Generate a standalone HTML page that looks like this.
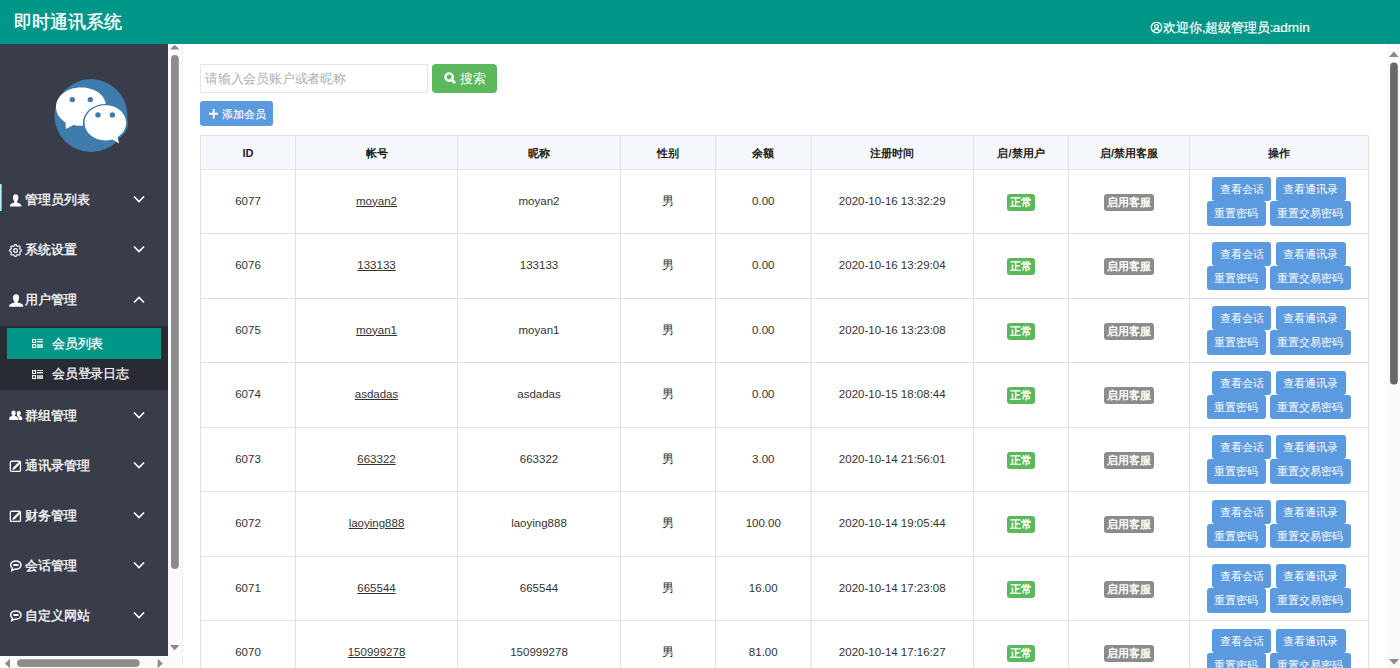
<!DOCTYPE html>
<html><head><meta charset="utf-8"><style>
*{box-sizing:border-box;margin:0;padding:0}
html,body{width:1400px;height:668px;overflow:hidden;background:#fff;font-family:"Liberation Sans",sans-serif;color:#333}
.abs{position:absolute}
#hdr{left:0;top:0;width:1400px;height:44px;background:#009688}
#title{left:14px;top:9.5px;font-size:18px;line-height:24px;color:#fff;white-space:nowrap;-webkit-text-stroke:.35px #fff}
#welcome{left:1150px;top:19px;font-size:13px;line-height:18px;color:#fff;white-space:nowrap;-webkit-text-stroke:.2px #fff}
#side{left:0;top:44px;width:168px;height:612px;background:#393D49;overflow:hidden}
.nav{position:absolute;left:0;width:168px;height:50px;color:#fff;font-size:13px}
.nav .ic{position:absolute;left:9px;top:19px;line-height:0}
.nav .tx{position:absolute;left:25px;top:16px;line-height:18px;white-space:nowrap;-webkit-text-stroke:.3px #fff}
.nav .ch{position:absolute;left:133px;top:20.3px;line-height:0}
.nav .ch.up{top:21px}
#sub{left:0;top:282px;width:168px;height:64px;background:#282B33}
.si{position:absolute;left:7px;width:154px;height:30px;color:#fff;font-size:13px}
.si .ic{position:absolute;left:25px;top:10px;line-height:0}
.si .tx{position:absolute;left:45px;top:6.4px;line-height:18px;white-space:nowrap;letter-spacing:-.25px;-webkit-text-stroke:.2px #fff}
.sbtrack{background:#fafafa}
.tri{position:absolute;width:0;height:0}
#search{left:200px;top:64px;width:228px;height:29px;border:1px solid #e6e6e6;font-size:13px;letter-spacing:-.2px;color:#b0b0b0;padding-left:4px;padding-top:1px;line-height:26px;white-space:nowrap}
#sbtn{left:432px;top:64px;width:65px;height:28.5px;background:#5cb85c;border-radius:4px;color:#fff;font-size:13px}
#abtn{left:200px;top:101px;width:73px;height:25px;background:#5b9ade;border-radius:3px;color:#fff;font-size:10.8px}
.hl{position:absolute;background:#e2e2e2}
.cell{position:absolute;text-align:center;white-space:nowrap}
.th{font-weight:bold;font-size:11px;color:#222;line-height:16px}
.td{font-size:11.5px;color:#333;line-height:16px}
.td u{text-decoration:underline}
.lab{position:absolute;height:17px;line-height:17px;font-size:10.8px;font-weight:bold;color:#fff;border-radius:3px;text-align:center}
.btn{position:absolute;height:24.2px;line-height:24px;font-size:10.8px;color:#fff;background:#5b9ade;border-radius:3px;text-align:center;white-space:nowrap}
</style></head><body>

<div id="hdr" class="abs"></div>
<div id="title" class="abs">即时通讯系统</div>
<div id="welcome" class="abs"><svg width="13" height="13" viewBox="0 0 13 13" style="vertical-align:-2.2px"><circle cx="6.5" cy="6.5" r="5.2" fill="none" stroke="#fff" stroke-width="1.35"/><circle cx="6.5" cy="5.5" r="1.85" fill="none" stroke="#fff" stroke-width="1.3"/><path d="M3.3 10.3C4.1 8.9 5.2 8.2 6.5 8.2S8.9 8.9 9.7 10.3" fill="none" stroke="#fff" stroke-width="1.3"/></svg>欢迎你<span style="letter-spacing:-1px">,</span>超级管理员<span style="letter-spacing:-.5px">:</span><span style="font-size:13.6px">admin</span></div>
<div id="side" class="abs">
<svg class="abs" style="left:54px;top:35px" width="74" height="74" viewBox="0 0 74 74">
<circle cx="37" cy="36.6" r="36.5" fill="#3f7cad"/>
<path d="M27 8.5C13 8.5 2 17.2 2 28.1C2 34.3 5.6 39.8 11.6 43.6L11.8 49.9L19.6 45.9C21.8 46.5 24.3 46.8 27 46.8C41 46.8 52 38.1 52 27.2C52 16.3 41 8.5 27 8.5Z" fill="#fff"/>
<ellipse cx="51.4" cy="44" rx="22.6" ry="19" fill="#3f7cad"/>
<path d="M51.4 26.2c-11.5 0-20.8 7.8-20.8 17.6 0 9.8 9.3 17.6 20.8 17.6 2.4 0 4.7-.3 6.9-1l6.9 4.2-1.7-6.4c5.3-3.2 8.7-8.6 8.7-14.4 0-9.8-9.3-17.6-20.8-17.6z" fill="#fff"/>
<circle cx="18.3" cy="20.6" r="2.7" fill="#3f7cad"/><circle cx="36.3" cy="20.6" r="2.7" fill="#3f7cad"/>
<circle cx="44" cy="35.9" r="2.7" fill="#3f7cad"/><circle cx="58.4" cy="35.9" r="2.7" fill="#3f7cad"/>
</svg>
</div>
<div id="sub" class="abs" style="top:326px"></div>
<div class="si" style="top:328.4px;height:30.2px;background:#009688"><span class="ic"><svg width="12" height="11" viewBox="0 0 12 11"><rect x=".55" y="1.55" width="3" height="2.9" fill="none" stroke="#fff" stroke-width="1.1"/><rect x=".55" y="6.65" width="3" height="2.9" fill="none" stroke="#fff" stroke-width="1.1"/><rect x="5" y="1.1" width="6" height=".9" fill="#fff"/><rect x="5" y="3.1" width="6" height="1.3" fill="#fff"/><rect x="5" y="6.1" width="6" height="3.9" fill="#fff" fill-opacity=".75"/></svg></span><span class="tx">会员列表</span></div>
<div class="si" style="top:358.5px"><span class="ic"><svg width="12" height="11" viewBox="0 0 12 11"><rect x=".55" y="1.55" width="3" height="2.9" fill="none" stroke="#fff" stroke-width="1.1"/><rect x=".55" y="6.65" width="3" height="2.9" fill="none" stroke="#fff" stroke-width="1.1"/><rect x="5" y="1.1" width="6" height=".9" fill="#fff"/><rect x="5" y="3.1" width="6" height="1.3" fill="#fff"/><rect x="5" y="6.1" width="6" height="3.9" fill="#fff" fill-opacity=".75"/></svg></span><span class="tx">会员登录日志</span></div>
<div class="nav" style="top:175.0px"><span class="ic"><svg width="15" height="13" viewBox="0 0 15 13"><path d="M6.7 0.3C8.6 0.3 9.4 1.7 9.4 3.6C9.4 5.3 8.9 6.6 8.1 7.3V8.4C10.5 8.9 12 10 12.4 11.2V12.4H1V11.2C1.4 10 2.9 8.9 5.3 8.4V7.3C4.5 6.6 4 5.3 4 3.6C4 1.7 4.8 0.3 6.7 0.3Z" fill="#fff"/></svg></span><span class="tx">管理员列表</span><span class="ch"><svg width="12" height="8" viewBox="0 0 12 8"><path d="M1 1.5l5 5 5-5" fill="none" stroke="#fff" stroke-width="1.6"/></svg></span></div>
<div class="nav" style="top:225.0px"><span class="ic"><svg width="13" height="13" viewBox="0 0 13 13"><path d="M12.55 6.50 L12.51 6.74 L12.39 6.96 L12.20 7.17 L11.96 7.37 L11.70 7.53 L11.43 7.68 L11.18 7.82 L10.96 7.95 L10.80 8.09 L10.70 8.24 L10.67 8.42 L10.68 8.63 L10.74 8.87 L10.82 9.15 L10.91 9.44 L10.98 9.75 L11.01 10.05 L10.99 10.34 L10.92 10.58 L10.78 10.78 L10.58 10.92 L10.34 10.99 L10.05 11.01 L9.75 10.98 L9.44 10.91 L9.15 10.82 L8.87 10.74 L8.63 10.68 L8.42 10.67 L8.24 10.70 L8.09 10.80 L7.95 10.96 L7.82 11.18 L7.68 11.43 L7.53 11.70 L7.37 11.96 L7.17 12.20 L6.96 12.39 L6.74 12.51 L6.50 12.55 L6.26 12.51 L6.04 12.39 L5.83 12.20 L5.63 11.96 L5.47 11.70 L5.32 11.43 L5.18 11.18 L5.05 10.96 L4.91 10.80 L4.76 10.70 L4.58 10.67 L4.37 10.68 L4.13 10.74 L3.85 10.82 L3.56 10.91 L3.25 10.98 L2.95 11.01 L2.66 10.99 L2.42 10.92 L2.22 10.78 L2.08 10.58 L2.01 10.34 L1.99 10.05 L2.02 9.75 L2.09 9.44 L2.18 9.15 L2.26 8.87 L2.32 8.63 L2.33 8.42 L2.30 8.24 L2.20 8.09 L2.04 7.95 L1.82 7.82 L1.57 7.68 L1.30 7.53 L1.04 7.37 L0.80 7.17 L0.61 6.96 L0.49 6.74 L0.45 6.50 L0.49 6.26 L0.61 6.04 L0.80 5.83 L1.04 5.63 L1.30 5.47 L1.57 5.32 L1.82 5.18 L2.04 5.05 L2.20 4.91 L2.30 4.76 L2.33 4.58 L2.32 4.37 L2.26 4.13 L2.18 3.85 L2.09 3.56 L2.02 3.25 L1.99 2.95 L2.01 2.66 L2.08 2.42 L2.22 2.22 L2.42 2.08 L2.66 2.01 L2.95 1.99 L3.25 2.02 L3.56 2.09 L3.85 2.18 L4.13 2.26 L4.37 2.32 L4.58 2.33 L4.76 2.30 L4.91 2.20 L5.05 2.04 L5.18 1.82 L5.32 1.57 L5.47 1.30 L5.63 1.04 L5.83 0.80 L6.04 0.61 L6.26 0.49 L6.50 0.45 L6.74 0.49 L6.96 0.61 L7.17 0.80 L7.37 1.04 L7.53 1.30 L7.68 1.57 L7.82 1.82 L7.95 2.04 L8.09 2.20 L8.24 2.30 L8.42 2.33 L8.63 2.32 L8.87 2.26 L9.15 2.18 L9.44 2.09 L9.75 2.02 L10.05 1.99 L10.34 2.01 L10.58 2.08 L10.78 2.22 L10.92 2.42 L10.99 2.66 L11.01 2.95 L10.98 3.25 L10.91 3.56 L10.82 3.85 L10.74 4.13 L10.68 4.37 L10.67 4.58 L10.70 4.76 L10.80 4.91 L10.96 5.05 L11.18 5.18 L11.43 5.32 L11.70 5.47 L11.96 5.63 L12.20 5.83 L12.39 6.04 L12.51 6.26 L12.55 6.50Z" fill="none" stroke="#fff" stroke-width="1.2"/><circle cx="6.5" cy="6.5" r="1.9" fill="none" stroke="#fff" stroke-width="1.2"/></svg></span><span class="tx">系统设置</span><span class="ch"><svg width="12" height="8" viewBox="0 0 12 8"><path d="M1 1.5l5 5 5-5" fill="none" stroke="#fff" stroke-width="1.6"/></svg></span></div>
<div class="nav" style="top:275.0px"><span class="ic"><svg width="15" height="13" viewBox="0 0 15 13"><path d="M7 0.3C9.2 0.3 10.1 1.8 10.1 3.8C10.1 5.5 9.5 6.9 8.6 7.6V8.6C11.5 9.1 13.8 10.3 14.2 11.5V12.7H0.2V11.5C0.6 10.3 2.9 9.1 5.6 8.6V7.6C4.6 6.9 4 5.5 4 3.8C4 1.8 4.9 0.3 7 0.3Z" fill="#fff"/></svg></span><span class="tx">用户管理</span><span class="ch up"><svg width="12" height="8" viewBox="0 0 12 8"><path d="M1 6.5l5-5 5 5" fill="none" stroke="#fff" stroke-width="1.6"/></svg></span></div>
<div class="nav" style="top:390.5px"><span class="ic"><svg width="14" height="11" viewBox="0 0 14 11"><path d="M9.8 1.1C11 1.1 11.8 2 11.8 3.2C11.8 4.2 11.4 5 10.9 5.5V6C12.3 6.3 13.2 7.1 13.2 8.1V10H9.4V8.3C9.4 7.3 8.9 6.5 8 5.9L8.3 5.5C8 5 7.8 4.2 7.8 3.2C7.8 2 8.6 1.1 9.8 1.1Z" fill="#fff"/><path d="M4.55 .6C5.9 .6 6.7 1.6 6.7 3C6.7 4.1 6.3 5 5.7 5.5V6C7.6 6.3 8.9 7.2 8.9 8.3V10H.2V8.3C.2 7.2 1.5 6.3 3.4 6V5.5C2.8 5 2.4 4.1 2.4 3C2.4 1.6 3.2 .6 4.55 .6Z" fill="#fff"/></svg></span><span class="tx">群组管理</span><span class="ch"><svg width="12" height="8" viewBox="0 0 12 8"><path d="M1 1.5l5 5 5-5" fill="none" stroke="#fff" stroke-width="1.6"/></svg></span></div>
<div class="nav" style="top:440.5px"><span class="ic"><svg width="13" height="13" viewBox="0 0 13 13"><rect x="1.35" y="1.25" width="10.1" height="10.1" rx="1.2" fill="none" stroke="#fff" stroke-width="1.3"/><path d="M3.2 10.1L4 7.7L10.3 1.4L11.9 3L5.6 9.3Z" fill="#fff"/></svg></span><span class="tx">通讯录管理</span><span class="ch"><svg width="12" height="8" viewBox="0 0 12 8"><path d="M1 1.5l5 5 5-5" fill="none" stroke="#fff" stroke-width="1.6"/></svg></span></div>
<div class="nav" style="top:490.5px"><span class="ic"><svg width="13" height="13" viewBox="0 0 13 13"><rect x="1.35" y="1.25" width="10.1" height="10.1" rx="1.2" fill="none" stroke="#fff" stroke-width="1.3"/><path d="M3.2 10.1L4 7.7L10.3 1.4L11.9 3L5.6 9.3Z" fill="#fff"/></svg></span><span class="tx">财务管理</span><span class="ch"><svg width="12" height="8" viewBox="0 0 12 8"><path d="M1 1.5l5 5 5-5" fill="none" stroke="#fff" stroke-width="1.6"/></svg></span></div>
<div class="nav" style="top:540.5px"><span class="ic"><svg width="13" height="13" viewBox="0 0 13 13"><path d="M6.9 .9C4 .9 1.7 2.8 1.7 5.1c0 1.3.6 2.4 1.6 3.1L2.8 10.6 5.6 9.2c.4.1.8.1 1.3.1 2.9 0 5.1-1.9 5.1-4.2S9.8.9 6.9.9z" fill="none" stroke="#fff" stroke-width="1.45"/><rect x="4.3" y="4.1" width="5.2" height="2" rx=".4" fill="#fff"/></svg></span><span class="tx">会话管理</span><span class="ch"><svg width="12" height="8" viewBox="0 0 12 8"><path d="M1 1.5l5 5 5-5" fill="none" stroke="#fff" stroke-width="1.6"/></svg></span></div>
<div class="nav" style="top:590.5px"><span class="ic"><svg width="13" height="13" viewBox="0 0 13 13"><path d="M6.9 .9C4 .9 1.7 2.8 1.7 5.1c0 1.3.6 2.4 1.6 3.1L2.8 10.6 5.6 9.2c.4.1.8.1 1.3.1 2.9 0 5.1-1.9 5.1-4.2S9.8.9 6.9.9z" fill="none" stroke="#fff" stroke-width="1.45"/><rect x="4.3" y="4.1" width="5.2" height="2" rx=".4" fill="#fff"/></svg></span><span class="tx">自定义网站</span><span class="ch"><svg width="12" height="8" viewBox="0 0 12 8"><path d="M1 1.5l5 5 5-5" fill="none" stroke="#fff" stroke-width="1.6"/></svg></span></div>
<div class="abs" style="left:0;top:183.7px;width:1.8px;height:27.8px;border-radius:0 1px 1px 0;background:linear-gradient(to right,#d0f6ff 0,#a8e8ff 45%,#1e8fff 100%)"></div>
<div class="abs sbtrack" style="left:168px;top:44px;width:14px;height:624px"></div>
<div class="abs" style="left:182px;top:44px;width:1px;height:624px;background:#f0f0f0"></div>
<svg class="abs" style="left:168px;top:44px" width="14" height="624" viewBox="0 0 14 624"><path d="M2 5.6h9.4L6.7 .8z" fill="#8a8a8a"/><rect x="3" y="11" width="7.8" height="514" rx="3.9" fill="#8c8c8c"/><path d="M2 601h9.4l-4.7 5.3z" fill="#8a8a8a"/></svg>
<div class="abs sbtrack" style="left:0;top:656px;width:168px;height:12px"></div>
<svg class="abs" style="left:0;top:656px" width="168" height="12" viewBox="0 0 168 12"><path d="M10 2.8v9.4L5 7.5z" fill="#8a8a8a"/><rect x="17" y="3.3" width="122.7" height="7.6" rx="3.8" fill="#8c8c8c"/><path d="M157.7 2.8v9.4l5-4.7z" fill="#8a8a8a"/></svg>
<div class="abs sbtrack" style="left:1387px;top:44px;width:13px;height:624px"></div>
<svg class="abs" style="left:1387px;top:44px" width="13" height="624" viewBox="0 0 13 624"><path d="M2 12.9h9.6L6.8 7.6z" fill="#8a8a8a"/><rect x="3.1" y="18.5" width="7.7" height="322" rx="3.85" fill="#686868"/><path d="M2 614.9h10l-5 5.5z" fill="#8a8a8a"/></svg>
<div id="search" class="abs">请输入会员账户或者昵称</div>
<div id="sbtn" class="abs"><svg class="abs" style="left:12px;top:8.3px" width="12" height="12" viewBox="0 0 12 12"><circle cx="5.1" cy="5.1" r="3.7" fill="none" stroke="#fff" stroke-width="2.4"/><path d="M7.8 7.8l2.4 2.4" stroke="#fff" stroke-width="2.8" stroke-linecap="round"/></svg><span class="abs" style="left:28px;top:5.6px;line-height:18px">搜索</span></div>
<div id="abtn" class="abs"><svg class="abs" style="left:9px;top:8.3px" width="9.4" height="9.4" viewBox="0 0 9.4 9.4"><path d="M4.7 0v9.4M0 4.7h9.4" stroke="#fff" stroke-width="1.9"/></svg><span class="abs" style="left:22px;top:5.8px;line-height:14px;-webkit-text-stroke:.15px #fff">添加会员</span></div>
<div class="abs" style="left:200px;top:135.4px;width:1168.2px;height:34.1px;background:#f5f9fd"></div>
<div class="hl" style="left:200px;top:135px;width:1px;height:533px"></div>
<div class="hl" style="left:295px;top:135px;width:1px;height:533px"></div>
<div class="hl" style="left:457px;top:135px;width:1px;height:533px"></div>
<div class="hl" style="left:620px;top:135px;width:1px;height:533px"></div>
<div class="hl" style="left:715px;top:135px;width:1px;height:533px"></div>
<div class="hl" style="left:973px;top:135px;width:1px;height:533px"></div>
<div class="hl" style="left:1068px;top:135px;width:1px;height:533px"></div>
<div class="hl" style="left:1189px;top:135px;width:1px;height:533px"></div>
<div class="hl" style="left:1368px;top:135px;width:1px;height:533px"></div>
<div class="hl" style="left:810px;top:135px;width:2px;height:533px;background:#ececec"></div>
<div class="hl" style="left:200px;top:135.00px;width:1169px;height:1px"></div>
<div class="hl" style="left:200px;top:169.00px;width:1169px;height:1px"></div>
<div class="hl" style="left:200px;top:233.00px;width:1169px;height:1px"></div>
<div class="hl" style="left:200px;top:298.00px;width:1169px;height:1px"></div>
<div class="hl" style="left:200px;top:362.00px;width:1169px;height:1px"></div>
<div class="hl" style="left:200px;top:427.00px;width:1169px;height:1px"></div>
<div class="hl" style="left:200px;top:491.00px;width:1169px;height:1px"></div>
<div class="hl" style="left:200px;top:556.00px;width:1169px;height:1px"></div>
<div class="hl" style="left:200px;top:620.00px;width:1169px;height:1px"></div>
<div class="cell th" style="left:200.50px;width:95.00px;top:144.9px">ID</div>
<div class="cell th" style="left:295.50px;width:162.00px;top:144.9px">帐号</div>
<div class="cell th" style="left:457.50px;width:163.00px;top:144.9px">昵称</div>
<div class="cell th" style="left:620.50px;width:95.00px;top:144.9px">性别</div>
<div class="cell th" style="left:715.50px;width:95.50px;top:144.9px">余额</div>
<div class="cell th" style="left:811.00px;width:162.50px;top:144.9px">注册时间</div>
<div class="cell th" style="left:973.50px;width:95.00px;top:144.9px">启/禁用户</div>
<div class="cell th" style="left:1068.50px;width:121.00px;top:144.9px">启/禁用客服</div>
<div class="cell th" style="left:1189.50px;width:179.00px;top:144.9px">操作</div>
<div class="cell td" style="left:200.50px;width:95.00px;top:192.5px">6077</div>
<div class="cell td" style="left:295.50px;width:162.00px;top:192.5px"><u>moyan2</u></div>
<div class="cell td" style="left:457.50px;width:163.00px;top:192.5px">moyan2</div>
<div class="cell td" style="left:620.50px;width:95.00px;top:192.5px">男</div>
<div class="cell td" style="left:715.50px;width:95.50px;top:192.5px">0.00</div>
<div class="cell td" style="left:811.00px;width:162.50px;top:192.5px">2020-10-16 13:32:29</div>
<div class="lab" style="left:1006.7px;top:193.9px;width:28.3px;background:#5cb85c">正常</div>
<div class="lab" style="left:1103.8px;top:193.9px;width:50.1px;background:#8c8c8c">启用客服</div>
<div class="btn" style="left:1212.1px;top:177.3px;width:59px">查看会话</div>
<div class="btn" style="left:1275.5px;top:177.3px;width:70px">查看通讯录</div>
<div class="btn" style="left:1206.8px;top:201.2px;width:59.2px;height:24.6px">重置密码</div>
<div class="btn" style="left:1269.7px;top:201.2px;width:81.1px;height:24.6px">重置交易密码</div>
<div class="cell td" style="left:200.50px;width:95.00px;top:257.0px">6076</div>
<div class="cell td" style="left:295.50px;width:162.00px;top:257.0px"><u>133133</u></div>
<div class="cell td" style="left:457.50px;width:163.00px;top:257.0px">133133</div>
<div class="cell td" style="left:620.50px;width:95.00px;top:257.0px">男</div>
<div class="cell td" style="left:715.50px;width:95.50px;top:257.0px">0.00</div>
<div class="cell td" style="left:811.00px;width:162.50px;top:257.0px">2020-10-16 13:29:04</div>
<div class="lab" style="left:1006.7px;top:258.4px;width:28.3px;background:#5cb85c">正常</div>
<div class="lab" style="left:1103.8px;top:258.4px;width:50.1px;background:#8c8c8c">启用客服</div>
<div class="btn" style="left:1212.1px;top:241.8px;width:59px">查看会话</div>
<div class="btn" style="left:1275.5px;top:241.8px;width:70px">查看通讯录</div>
<div class="btn" style="left:1206.8px;top:265.7px;width:59.2px;height:24.6px">重置密码</div>
<div class="btn" style="left:1269.7px;top:265.7px;width:81.1px;height:24.6px">重置交易密码</div>
<div class="cell td" style="left:200.50px;width:95.00px;top:321.5px">6075</div>
<div class="cell td" style="left:295.50px;width:162.00px;top:321.5px"><u>moyan1</u></div>
<div class="cell td" style="left:457.50px;width:163.00px;top:321.5px">moyan1</div>
<div class="cell td" style="left:620.50px;width:95.00px;top:321.5px">男</div>
<div class="cell td" style="left:715.50px;width:95.50px;top:321.5px">0.00</div>
<div class="cell td" style="left:811.00px;width:162.50px;top:321.5px">2020-10-16 13:23:08</div>
<div class="lab" style="left:1006.7px;top:322.9px;width:28.3px;background:#5cb85c">正常</div>
<div class="lab" style="left:1103.8px;top:322.9px;width:50.1px;background:#8c8c8c">启用客服</div>
<div class="btn" style="left:1212.1px;top:306.3px;width:59px">查看会话</div>
<div class="btn" style="left:1275.5px;top:306.3px;width:70px">查看通讯录</div>
<div class="btn" style="left:1206.8px;top:330.2px;width:59.2px;height:24.6px">重置密码</div>
<div class="btn" style="left:1269.7px;top:330.2px;width:81.1px;height:24.6px">重置交易密码</div>
<div class="cell td" style="left:200.50px;width:95.00px;top:386.0px">6074</div>
<div class="cell td" style="left:295.50px;width:162.00px;top:386.0px"><u>asdadas</u></div>
<div class="cell td" style="left:457.50px;width:163.00px;top:386.0px">asdadas</div>
<div class="cell td" style="left:620.50px;width:95.00px;top:386.0px">男</div>
<div class="cell td" style="left:715.50px;width:95.50px;top:386.0px">0.00</div>
<div class="cell td" style="left:811.00px;width:162.50px;top:386.0px">2020-10-15 18:08:44</div>
<div class="lab" style="left:1006.7px;top:387.4px;width:28.3px;background:#5cb85c">正常</div>
<div class="lab" style="left:1103.8px;top:387.4px;width:50.1px;background:#8c8c8c">启用客服</div>
<div class="btn" style="left:1212.1px;top:370.8px;width:59px">查看会话</div>
<div class="btn" style="left:1275.5px;top:370.8px;width:70px">查看通讯录</div>
<div class="btn" style="left:1206.8px;top:394.7px;width:59.2px;height:24.6px">重置密码</div>
<div class="btn" style="left:1269.7px;top:394.7px;width:81.1px;height:24.6px">重置交易密码</div>
<div class="cell td" style="left:200.50px;width:95.00px;top:450.5px">6073</div>
<div class="cell td" style="left:295.50px;width:162.00px;top:450.5px"><u>663322</u></div>
<div class="cell td" style="left:457.50px;width:163.00px;top:450.5px">663322</div>
<div class="cell td" style="left:620.50px;width:95.00px;top:450.5px">男</div>
<div class="cell td" style="left:715.50px;width:95.50px;top:450.5px">3.00</div>
<div class="cell td" style="left:811.00px;width:162.50px;top:450.5px">2020-10-14 21:56:01</div>
<div class="lab" style="left:1006.7px;top:451.9px;width:28.3px;background:#5cb85c">正常</div>
<div class="lab" style="left:1103.8px;top:451.9px;width:50.1px;background:#8c8c8c">启用客服</div>
<div class="btn" style="left:1212.1px;top:435.3px;width:59px">查看会话</div>
<div class="btn" style="left:1275.5px;top:435.3px;width:70px">查看通讯录</div>
<div class="btn" style="left:1206.8px;top:459.2px;width:59.2px;height:24.6px">重置密码</div>
<div class="btn" style="left:1269.7px;top:459.2px;width:81.1px;height:24.6px">重置交易密码</div>
<div class="cell td" style="left:200.50px;width:95.00px;top:515.0px">6072</div>
<div class="cell td" style="left:295.50px;width:162.00px;top:515.0px"><u>laoying888</u></div>
<div class="cell td" style="left:457.50px;width:163.00px;top:515.0px">laoying888</div>
<div class="cell td" style="left:620.50px;width:95.00px;top:515.0px">男</div>
<div class="cell td" style="left:715.50px;width:95.50px;top:515.0px">100.00</div>
<div class="cell td" style="left:811.00px;width:162.50px;top:515.0px">2020-10-14 19:05:44</div>
<div class="lab" style="left:1006.7px;top:516.4px;width:28.3px;background:#5cb85c">正常</div>
<div class="lab" style="left:1103.8px;top:516.4px;width:50.1px;background:#8c8c8c">启用客服</div>
<div class="btn" style="left:1212.1px;top:499.8px;width:59px">查看会话</div>
<div class="btn" style="left:1275.5px;top:499.8px;width:70px">查看通讯录</div>
<div class="btn" style="left:1206.8px;top:523.7px;width:59.2px;height:24.6px">重置密码</div>
<div class="btn" style="left:1269.7px;top:523.7px;width:81.1px;height:24.6px">重置交易密码</div>
<div class="cell td" style="left:200.50px;width:95.00px;top:579.5px">6071</div>
<div class="cell td" style="left:295.50px;width:162.00px;top:579.5px"><u>665544</u></div>
<div class="cell td" style="left:457.50px;width:163.00px;top:579.5px">665544</div>
<div class="cell td" style="left:620.50px;width:95.00px;top:579.5px">男</div>
<div class="cell td" style="left:715.50px;width:95.50px;top:579.5px">16.00</div>
<div class="cell td" style="left:811.00px;width:162.50px;top:579.5px">2020-10-14 17:23:08</div>
<div class="lab" style="left:1006.7px;top:580.9px;width:28.3px;background:#5cb85c">正常</div>
<div class="lab" style="left:1103.8px;top:580.9px;width:50.1px;background:#8c8c8c">启用客服</div>
<div class="btn" style="left:1212.1px;top:564.3px;width:59px">查看会话</div>
<div class="btn" style="left:1275.5px;top:564.3px;width:70px">查看通讯录</div>
<div class="btn" style="left:1206.8px;top:588.2px;width:59.2px;height:24.6px">重置密码</div>
<div class="btn" style="left:1269.7px;top:588.2px;width:81.1px;height:24.6px">重置交易密码</div>
<div class="cell td" style="left:200.50px;width:95.00px;top:644.0px">6070</div>
<div class="cell td" style="left:295.50px;width:162.00px;top:644.0px"><u>150999278</u></div>
<div class="cell td" style="left:457.50px;width:163.00px;top:644.0px">150999278</div>
<div class="cell td" style="left:620.50px;width:95.00px;top:644.0px">男</div>
<div class="cell td" style="left:715.50px;width:95.50px;top:644.0px">81.00</div>
<div class="cell td" style="left:811.00px;width:162.50px;top:644.0px">2020-10-14 17:16:27</div>
<div class="lab" style="left:1006.7px;top:645.4px;width:28.3px;background:#5cb85c">正常</div>
<div class="lab" style="left:1103.8px;top:645.4px;width:50.1px;background:#8c8c8c">启用客服</div>
<div class="btn" style="left:1212.1px;top:628.8px;width:59px">查看会话</div>
<div class="btn" style="left:1275.5px;top:628.8px;width:70px">查看通讯录</div>
<div class="btn" style="left:1206.8px;top:652.7px;width:59.2px;height:24.6px">重置密码</div>
<div class="btn" style="left:1269.7px;top:652.7px;width:81.1px;height:24.6px">重置交易密码</div>
</body></html>
